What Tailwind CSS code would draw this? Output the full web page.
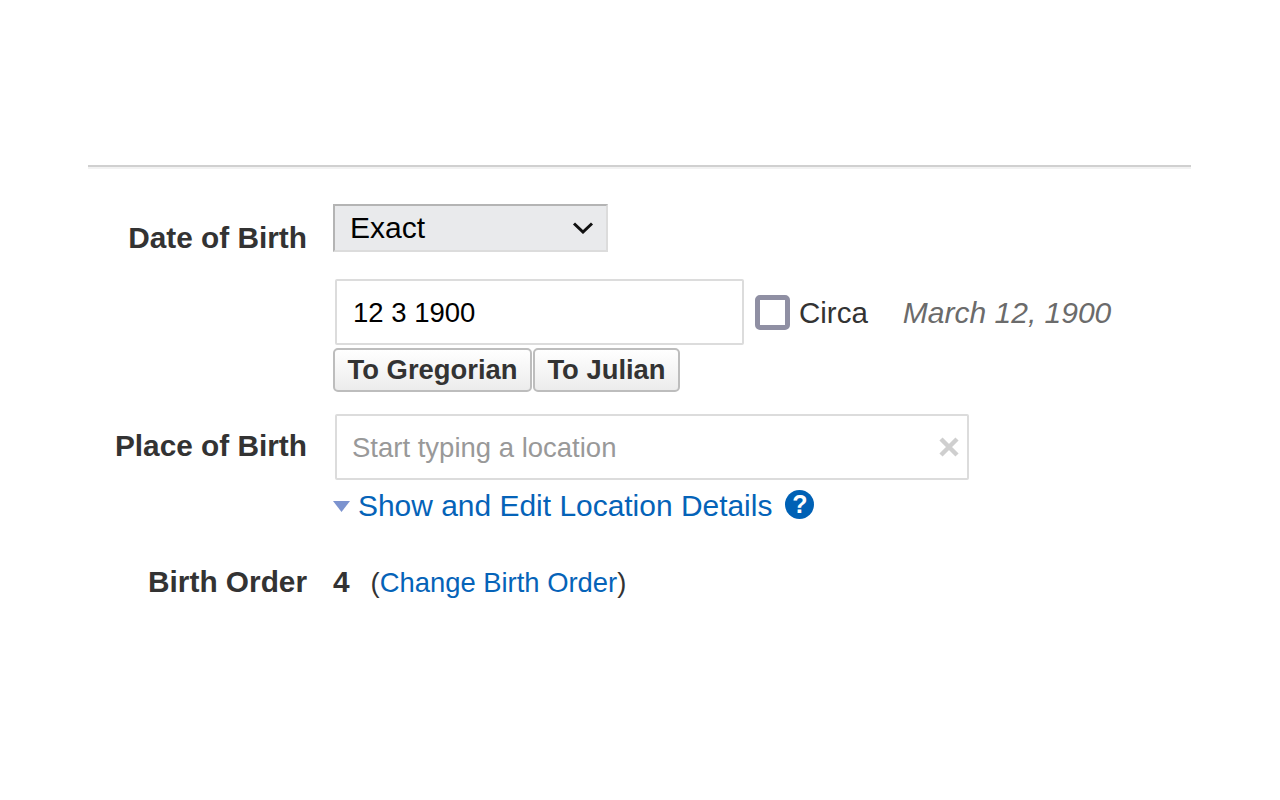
<!DOCTYPE html>
<html lang="en">
<head>
  <meta charset="UTF-8" />
  <title>Edit Person</title>
  <script src="https://cdn.jsdelivr.net/npm/@tailwindcss/browser@4"></script>
</head>
<body class="bg-white h-[800px] overflow-hidden font-['Liberation_Sans',Arial,sans-serif] text-[#333]">
  <main class="ml-[88px] w-[1103px] pt-[165px]">
    <div class="h-[4px] border-t-2 border-[#d0d0d0] bg-[#f2f2f2]"></div>

    <!-- date of birth -->
    <div class="flex mt-[35px]">
      <div class="w-[219px] pt-[16px] text-right text-[29.8px] leading-[35px] font-bold">Date of Birth</div>
      <div class="ml-[26px]">
        <div class="relative w-[275px] h-[48px] border-2 border-[#dcdcdc] border-t-[#b4b4b4] border-l-[#b4b4b4] bg-[#e9eaec] pl-[15px] text-[30px] leading-[44px] text-black">
          Exact
          <svg class="absolute right-[12px] top-[16px]" width="22" height="12" viewBox="0 0 22 12" fill="none" stroke="#111" stroke-width="3"><path d="M2 1.5 11 10 20 1.5" /></svg>
        </div>
        <div class="flex items-center mt-[27px] ml-[2px]">
          <div class="w-[409px] h-[66px] border-2 border-[#dcdcdc] rounded-[2px] pl-[16px] text-[27.5px] leading-[64px] text-black">12 3 1900</div>
          <div class="ml-[11px] w-[35px] h-[35px] border-[5px] border-[#8f8fa3] rounded-[5px] bg-white"></div>
          <span class="ml-[9px] mt-[2px] text-[29.5px] leading-[36px]">Circa</span>
          <span class="ml-[35px] mt-[2px] text-[30px] leading-[36px] italic text-[#6b6b6b]">March 12, 1900</span>
        </div>
        <div class="flex mt-[3px] gap-[1px]">
          <button class="w-[199px] h-[44px] border-2 border-[#bdbdbd] rounded-[5px] bg-gradient-to-b from-white to-[#ececec] text-[27.4px] leading-[36px] font-bold">To Gregorian</button>
          <button class="w-[147px] h-[44px] border-2 border-[#bdbdbd] rounded-[5px] bg-gradient-to-b from-white to-[#ececec] text-[27.4px] leading-[36px] font-bold">To Julian</button>
        </div>
      </div>
    </div>

    <!-- place of birth -->
    <div class="flex mt-[22px]">
      <div class="w-[219px] pt-[14px] text-right text-[29.8px] leading-[36px] font-bold">Place of Birth</div>
      <div class="ml-[26px]">
        <div class="relative ml-[2px] w-[634px] h-[66px] border-2 border-[#dcdcdc] rounded-[2px] pl-[15px] text-[27.5px] leading-[64px] text-[#999]">
          Start typing a location
          <svg class="absolute right-[8px] top-[21px]" width="20" height="20" viewBox="0 0 20 20" stroke="#cfcfcf" stroke-width="4.5"><path d="M2 2 18 18M18 2 2 18" /></svg>
        </div>
        <div class="flex items-center mt-[6px] h-[40px]">
          <svg class="mt-[1px]" width="17" height="11" viewBox="0 0 17 11"><path d="M0 0H17L8.5 11Z" fill="#7c93cf" /></svg>
          <a href="#" class="ml-[8px] text-[29.95px] leading-[36px] text-[#0563b8]">Show and Edit Location Details</a>
          <span class="ml-[13px] -mt-[3px] w-[29px] h-[29px] rounded-full bg-[#0061b5] text-white text-[25px] leading-[29px] font-bold text-center">?</span>
        </div>
      </div>
    </div>

    <!-- birth order -->
    <div class="flex mt-[38px]">
      <div class="w-[219px] text-right text-[29.8px] leading-[36px] font-bold">Birth Order</div>
      <div class="ml-[26px] flex items-start">
        <span class="text-[29.8px] leading-[36px] font-bold">4</span>
        <span class="ml-[21px] text-[27.4px] leading-[38px]">(<a href="#" class="text-[#0563b8]">Change Birth Order</a>)</span>
      </div>
    </div>
  </main>
</body>
</html>
